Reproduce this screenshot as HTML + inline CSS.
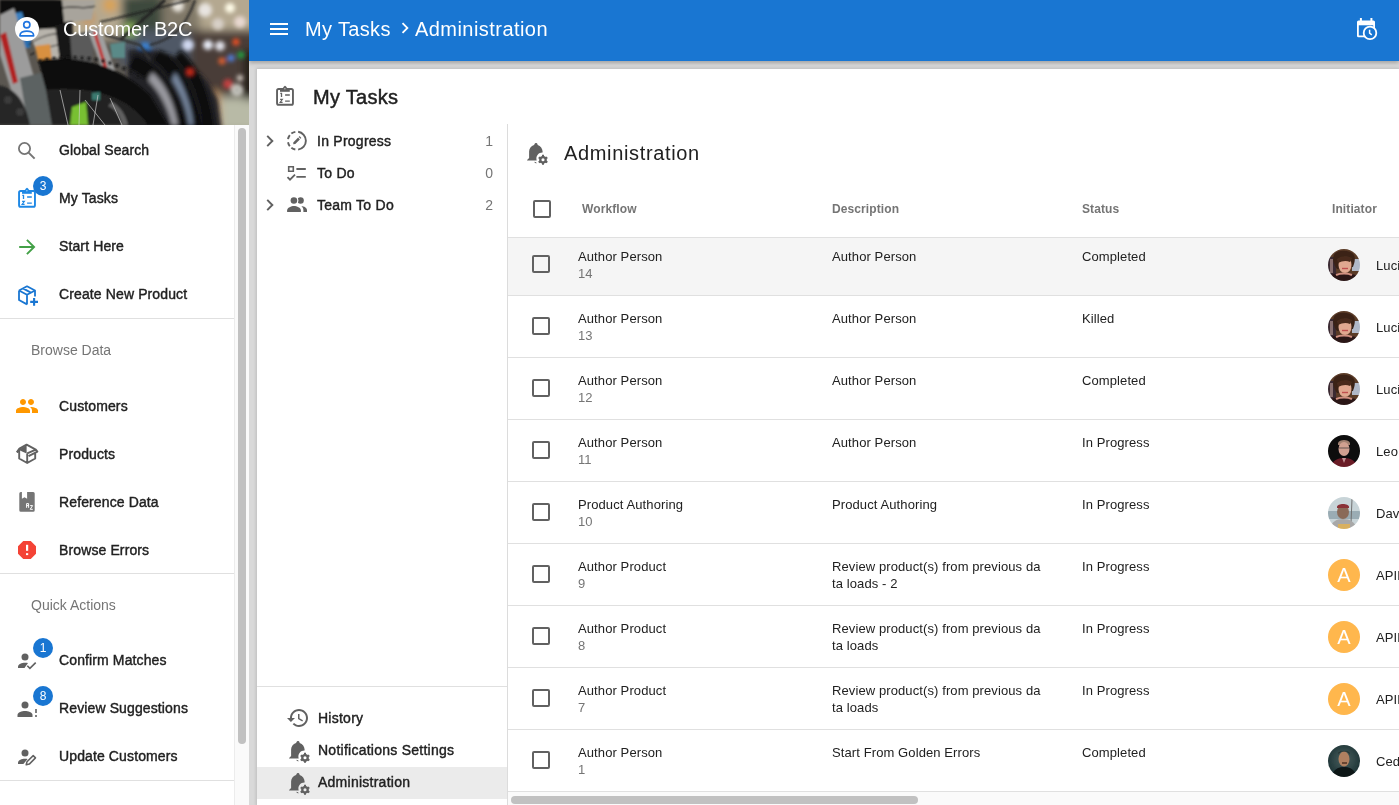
<!DOCTYPE html>
<html><head><meta charset="utf-8">
<style>
*{box-sizing:border-box;margin:0;padding:0}
html,body{width:1399px;height:805px;overflow:hidden;background:#fff;-webkit-font-smoothing:antialiased;font-family:"Liberation Sans",sans-serif;color:#212121}
.a{position:absolute;white-space:nowrap}
svg{display:block}
.mi{position:absolute;left:59px;font-size:14px;line-height:20px;color:#212121;-webkit-text-stroke:0.4px #212121;white-space:nowrap;letter-spacing:0.12px}
.lab{position:absolute;left:31px;font-size:14px;line-height:20px;color:#757575;white-space:nowrap}
.ic{position:absolute}
.badge{position:absolute;width:20px;height:20px;border-radius:50%;background:#1976d2;color:#fff;font-size:12px;line-height:20px;text-align:center}
.div{position:absolute;left:0;width:234px;height:1px;background:#e0e0e0}
.tr{position:absolute;left:317px;font-size:14px;line-height:20px;color:#212121;-webkit-text-stroke:0.4px #212121;white-space:nowrap;letter-spacing:0.25px}
.cnt{position:absolute;right:906px;font-size:14px;line-height:20px;color:#757575;white-space:nowrap}
.hd{position:absolute;font-size:12px;line-height:16px;font-weight:700;color:#757575;white-space:nowrap;letter-spacing:0.1px}
.row{position:absolute;left:508px;width:891px;height:62px;border-bottom:1px solid #e0e0e0}
.cb{position:absolute;width:18px;height:18px;border:2px solid #616161;border-radius:2px}
.t1{position:absolute;font-size:13px;line-height:16px;color:#212121;white-space:nowrap;letter-spacing:0.1px}
.t2{position:absolute;font-size:13px;line-height:16px;color:#757575;white-space:nowrap}
.av{position:absolute;left:1328px;width:32px;height:32px;border-radius:50%;overflow:hidden}
.avA{background:#ffb74d;color:#fff;font-size:20px;line-height:32px;text-align:center}
</style></head>
<body><div style="position:absolute;left:0;top:0;width:1399px;height:805px;will-change:transform">
<!-- grey background -->
<div class="a" style="left:249px;top:61px;width:1150px;height:744px;background:#d9d9d9"></div>


<!-- top blue bar -->
<div class="a" style="left:249px;top:0;width:1150px;height:61px;background:#1976d2;box-shadow:0 2px 4px rgba(0,0,0,.25)"></div>
<svg class="ic" style="left:267px;top:17px" width="24" height="24" viewBox="0 0 24 24"><path fill="#fff" d="M3 18h18v-2H3v2zm0-5h18v-2H3v2zm0-7v2h18V6H3z"/></svg>
<div class="a" style="left:305px;top:17px;font-size:20px;line-height:24px;color:#fff;letter-spacing:0.35px">My Tasks</div>
<svg class="ic" style="left:394px;top:17px" width="22" height="22" viewBox="0 0 24 24"><path fill="#fff" d="M10 6L8.59 7.41 13.17 12l-4.58 4.59L10 18l6-6z"/></svg>
<div class="a" style="left:415px;top:17px;font-size:20px;line-height:24px;color:#fff;letter-spacing:0.45px">Administration</div>
<svg class="ic" style="left:1354px;top:16px" width="25" height="25" viewBox="0 0 25 25"><rect x="3" y="4.5" width="18" height="16.8" rx="1.6" fill="#fff"/><path d="M6.9 2v3.5M17.4 2v3.5" stroke="#fff" stroke-width="2"/><rect x="4.8" y="9.3" width="14.4" height="10.2" fill="#1976d2"/><circle cx="16" cy="16.9" r="6.3" fill="#1976d2" stroke="#fff" stroke-width="1.8"/><path d="M15.6 13.8v3.4l2.2 1.6" fill="none" stroke="#fff" stroke-width="1.5"/></svg>

<!-- white card -->
<div class="a" style="left:257px;top:69px;width:1142px;height:736px;background:#fff;box-shadow:0 0 3px 1px rgba(0,0,0,.13)"></div>

<!-- sidebar -->
<div class="a" style="left:0;top:0;width:249px;height:805px;background:#fff;overflow:hidden">
  <svg class="a" style="left:0;top:0" width="249" height="125" viewBox="0 0 249 125">
    <defs>
      <filter id="b1" x="-30%" y="-30%" width="160%" height="160%"><feGaussianBlur stdDeviation="4"/></filter>
      <filter id="b2" x="-30%" y="-30%" width="160%" height="160%"><feGaussianBlur stdDeviation="2"/></filter>
      <filter id="b3" x="-10%" y="-10%" width="120%" height="120%"><feGaussianBlur stdDeviation="1.1"/></filter>
    </defs>
    <rect width="249" height="125" fill="#5a5650"/>
    <g filter="url(#b1)">
      <rect x="60" y="-10" width="200" height="50" fill="#b4a890"/><rect x="140" y="-10" width="60" height="50" fill="#807868"/>
      <rect x="190" y="30" width="70" height="65" fill="#4a3e38"/>
      <rect x="120" y="30" width="70" height="35" fill="#505866"/>
      <rect x="122" y="-5" width="40" height="35" fill="#3e4a3c"/>
      <circle cx="110" cy="5" r="7" fill="#e0a040"/>
      <circle cx="88" cy="18" r="6" fill="#d09040"/>
      <circle cx="130" cy="30" r="6" fill="#a0d060"/>
      <rect x="220" y="97" width="40" height="35" fill="#b8baa6"/>
      <rect x="207" y="92" width="13" height="40" fill="#c89a68"/>
      <rect x="244" y="50" width="10" height="50" fill="#181410"/>
    </g>
    <g filter="url(#b2)">
      <circle cx="230" cy="8" r="5" fill="#fffce8"/>
      <circle cx="205" cy="10" r="7" fill="#e8e4e0"/>
      <circle cx="178" cy="6" r="6" fill="#e8e4dc"/>
      <circle cx="240" cy="22" r="6" fill="#e8d8d0"/>
      <circle cx="218" cy="24" r="6" fill="#d8d0c8"/>
      <circle cx="208" cy="45" r="5" fill="#e8ecf8"/>
      <circle cx="220" cy="46" r="5" fill="#e0e0e8"/>
      <circle cx="188" cy="45" r="6" fill="#d0d8f0"/>
      <circle cx="236" cy="42" r="3.5" fill="#f05020"/>
      <circle cx="241" cy="55" r="3.5" fill="#20a040"/>
      <circle cx="231" cy="58" r="3.5" fill="#5080e0"/>
      <circle cx="222" cy="61" r="3.5" fill="#e06030"/>
      <circle cx="228" cy="84" r="5" fill="#c04040"/>
      <circle cx="237" cy="90" r="6" fill="#d8d8d0"/>
      <circle cx="237" cy="90" r="1.8" fill="#202020"/>
      <circle cx="240" cy="78" r="3" fill="#e0d8d0"/>
    </g>
    <g filter="url(#b2)">
      <circle cx="145" cy="48" r="6" fill="#3a80d0"/>
      <circle cx="168" cy="62" r="5" fill="#4a88d0"/>
      <path d="M128 50 C160 45 200 60 218 100 L222 130 L128 130z" fill="#222226"/>
      <path d="M180 50 C200 65 212 100 215 130 L204 130 C200 102 192 78 175 58z" fill="#0a0a0a"/>
      <path d="M160 50 C185 62 198 100 203 130 L190 130 C186 102 174 76 152 60z" fill="#0a0a0a"/>
      <path d="M135 55 C165 65 182 100 188 130 L174 130 C168 104 156 82 128 68z" fill="#0a0a0a"/>
      <path d="M152 72 C168 86 175 108 178 125 L172 125 C168 108 160 92 148 80z" fill="#9a9aa0"/>
      <path d="M175 72 C186 90 192 110 193 125 L189 125 C187 110 182 96 172 80z" fill="#7888a0"/>
      <circle cx="190" cy="72" r="3" fill="#e03020"/>
    </g>
    <g filter="url(#b3)">
      <path d="M0 0 H75 L72 30 L58 42 L35 28 L12 20 L0 14z" fill="#0c0c0c"/><path d="M8 14 L22 12 L24 20 L12 22z" fill="#3a80c0"/><path d="M20 35 L32 30 L30 48 L22 48z" fill="#2a70b0"/>
      <path d="M28 30 L60 28 L66 58 L40 60z" fill="#b8b4ac"/><path d="M28 45 C40 36 55 32 66 34M30 55 C45 48 55 44 70 44" stroke="#111" stroke-width="1" fill="none"/>
      <path d="M35 46 L50 44 L52 60 L38 60z" fill="#d89040"/>
      <path d="M62 0 H95 L92 20 L64 22z" fill="#a8a49c"/><path d="M62 8 C75 5 85 10 95 6" stroke="#111" stroke-width="1.2" fill="none"/>
      <path d="M55 25 L72 22 L75 62 L60 62z" fill="#151515"/>
      <path d="M70 35 L95 30 L92 62 L72 62z" fill="#5a5a5a"/>
      <path d="M88 30 L100 28 L115 70 L103 72z" fill="#a0a0a0"/><path d="M100 22 C120 18 150 10 190 0" stroke="#1a1a1a" stroke-width="1.5" fill="none"/><path d="M120 40 L165 0" stroke="#222" stroke-width="3" fill="none"/><path d="M150 45 C170 40 185 30 195 0" stroke="#2a2a2a" stroke-width="2" fill="none"/><path d="M105 35 L140 45 L150 60" stroke="#333" stroke-width="2.5" fill="none"/>
      <path d="M93 32 L96 31 L108 70 L105 71z" fill="#c03030"/>
      <path d="M110 44 L125 42 L125 58 L112 58z" fill="#5a8a88"/>
      <path d="M0 15 L14 8 L45 115 L52 125 L22 125 L0 55z" fill="#9c9c9c"/>
      <path d="M0 35 L6 32 L18 82 L13 84z" fill="#b02424"/>
      <path d="M20 78 L44 72 L56 125 L28 125z" fill="#5c6262"/>
      <path d="M-2 85 C15 88 25 100 30 125 L-2 125z" fill="#262626"/>
      <circle cx="8" cy="100" r="4" fill="#3a3a3a"/><circle cx="20" cy="112" r="4" fill="#3a3a3a"/>
      <path d="M38 60 C75 55 115 62 150 95 L168 125 L148 125 C130 98 95 86 46 90z" fill="#0e0e0e"/>
      <path d="M46 90 C95 86 130 98 148 125 L52 125z" fill="#222"/>
      <path d="M72 107 L86 102 L88 125 L70 125z" fill="#78c030"/>
      <path d="M92 93 L100 92 L100 100 L92 100z" fill="#3a7a70"/>
      <path d="M112 102 C120 106 126 115 128 125 L122 125 C120 115 114 108 108 106z" fill="#606060"/>
    </g>
    <g stroke="#d0d0d0" stroke-width="0.8" opacity="0.85" fill="none">
      <path d="M60 90 L68 125M80 90 L79 125M85 100 L105 125M98 95 L93 125M110 98 L122 125"/>
    </g>
    <g fill="#1a1a1a" filter="url(#b3)"><circle cx="40" cy="61" r="1.8"/><circle cx="47" cy="59.5" r="1.8"/><circle cx="54" cy="58.5" r="1.8"/><circle cx="61" cy="58" r="1.8"/><circle cx="68" cy="57.5" r="1.8"/><circle cx="75" cy="57.5" r="1.8"/><circle cx="82" cy="58" r="1.8"/><circle cx="89" cy="58.5" r="1.8"/><circle cx="96" cy="59.5" r="1.8"/><circle cx="103" cy="61" r="1.8"/><circle cx="110" cy="63" r="1.8"/><circle cx="117" cy="65.5" r="1.8"/><circle cx="124" cy="68.5" r="1.8"/><circle cx="131" cy="72" r="1.8"/><circle cx="138" cy="76" r="1.8"/></g>
  </svg>
  <!-- avatar -->
  <div class="a" style="left:15px;top:17px;width:24px;height:24px;border-radius:50%;background:#fff"></div>
  <svg class="ic" style="left:15px;top:17px" width="24" height="24" viewBox="0 0 24 24"><circle cx="11.8" cy="7.7" r="3.1" fill="none" stroke="#2176e0" stroke-width="1.7"/><path d="M5 18.8v-.6c0-2.8 3.5-4.1 6.8-4.1s6.8 1.3 6.8 4.1v.6z" fill="none" stroke="#2176e0" stroke-width="1.7" stroke-linejoin="round"/></svg>
  <div class="a" style="left:63px;top:17px;font-size:20px;line-height:24px;color:#fff;letter-spacing:-0.15px">Customer B2C</div>

  <!-- scrollbar -->
  <div class="a" style="left:234px;top:125px;width:15px;height:680px;background:#fafafa;border-left:1px solid #ececec"></div>
  <div class="a" style="left:238px;top:128px;width:8px;height:616px;border-radius:4px;background:#c1c1c1"></div>

  <div class="div" style="top:318px"></div>
  <div class="div" style="top:573px"></div>
  <div class="div" style="top:780px"></div>

  <div class="mi" style="top:140px">Global Search</div>
  <div class="mi" style="top:188px">My Tasks</div>
  <div class="mi" style="top:236px">Start Here</div>
  <div class="mi" style="top:284px">Create New Product</div>
  <div class="lab" style="top:340px">Browse Data</div>
  <div class="mi" style="top:396px">Customers</div>
  <div class="mi" style="top:444px">Products</div>
  <div class="mi" style="top:492px">Reference Data</div>
  <div class="mi" style="top:540px">Browse Errors</div>
  <div class="lab" style="top:595px">Quick Actions</div>
  <div class="mi" style="top:650px">Confirm Matches</div>
  <div class="mi" style="top:698px">Review Suggestions</div>
  <div class="mi" style="top:746px">Update Customers</div>

  <!-- icons -->
  <svg class="ic" style="left:15px;top:139px" width="24" height="24" viewBox="0 0 24 24"><circle cx="9.5" cy="9.5" r="5.6" fill="none" stroke="#757575" stroke-width="1.8"/><path d="M13.6 13.6l6 6" stroke="#757575" stroke-width="2"/></svg>
  <svg class="ic" style="left:15px;top:186px" width="24" height="24" viewBox="0 0 24 24"><rect x="4.05" y="4.95" width="15.9" height="15.8" rx="1.6" fill="none" stroke="#1e88e5" stroke-width="1.9"/><rect x="7" y="5.6" width="9.8" height="2.2" fill="#1e88e5"/><path d="M9.2 4.8L11 2.4a1.3 1.3 0 0 1 2 0l1.8 2.4z" fill="#1e88e5"/><circle cx="11.9" cy="4.7" r="0.75" fill="#fff" opacity=".6"/><path d="M7.3 9.3h1.2v3.6" fill="none" stroke="#1e88e5" stroke-width="1.3"/><path d="M12.1 11h4.7M12.1 17.1h4.7" stroke="#1e88e5" stroke-width="1.45"/><path d="M7.1 15.4h2.3l-2.3 3h2.5" fill="none" stroke="#1e88e5" stroke-width="1.1"/></svg>
  <div class="badge" style="left:33px;top:176px">3</div>
  <svg class="ic" style="left:15px;top:234px" width="24" height="24" viewBox="0 0 24 24"><path d="M4.2 13h14.6M11.9 5.8l7.2 7.2-7.2 7.2" fill="none" stroke="#43a047" stroke-width="1.9"/></svg>
  <svg class="ic" style="left:15px;top:282px" width="26" height="26" viewBox="0 0 26 26"><path d="M4 8.5l8-4.2 8 4.2v6M4 8.5v9.5l8 4.4M4 8.5l8 4.2v9.7M12 12.7l8-4.2M7.9 6.4l8 4.2" fill="none" stroke="#1976d2" stroke-width="1.8" stroke-linejoin="round"/><path d="M19.1 16.1v7.6M15.2 19.9h7.8" stroke="#1976d2" stroke-width="2.1"/></svg>
  <svg class="ic" style="left:15px;top:394px" width="24" height="24" viewBox="0 0 24 24"><path fill="#ff9800" d="M16 11c1.66 0 2.99-1.34 2.99-3S17.66 5 16 5c-1.66 0-3 1.34-3 3s1.34 3 3 3zm-8 0c1.66 0 2.99-1.34 2.99-3S9.66 5 8 5C6.34 5 5 6.34 5 8s1.34 3 3 3zm0 2c-2.33 0-7 1.17-7 3.5V19h14v-2.5c0-2.33-4.67-3.5-7-3.5zm8 0c-.29 0-.62.02-.97.05 1.16.84 1.97 1.97 1.97 3.45V19h6v-2.5c0-2.33-4.67-3.5-7-3.5z"/></svg>
  <svg class="ic" style="left:15px;top:441px" width="24" height="24" viewBox="0 0 24 24"><path d="M4.2 8.4v9.1L12.2 22l8-4.5v-6.6M12.2 12.6V22M1.8 11.4L4.4 7.6 11.6 3.6 20.8 8.6 22.4 10.6 13.6 15.2M12.2 12.4L20.8 8.6" fill="none" stroke="#616161" stroke-width="1.9" stroke-linejoin="round"/><path d="M4.4 8.2L11.6 4.2V12.4L4.4 9.2z" fill="#616161"/><path d="M2 11.2L4.4 9.8" stroke="#616161" stroke-width="1.6"/></svg>
  <svg class="ic" style="left:15px;top:489px" width="24" height="24" viewBox="0 0 24 24"><path d="M5.8 2.9H6.9V9.8L9.5 8.3 12.1 9.8V2.9H18.2A1.5 1.5 0 0 1 19.7 4.4V21.2A1.5 1.5 0 0 1 18.2 22.7H5.8A1.5 1.5 0 0 1 4.3 21.2V4.4A1.5 1.5 0 0 1 5.8 2.9z" fill="#757575"/><path d="M11.6 18.8V14.6h2v4.2M11.6 16.6h2M15.2 16.6h2.4l-2.4 3.7h2.6" fill="none" stroke="#fff" stroke-width="1"/></svg>
  <svg class="ic" style="left:15px;top:538px" width="24" height="24" viewBox="0 0 24 24"><path fill="#f44336" d="M15.73 3H8.27L3 8.27v7.46L8.27 21h7.46L21 15.73V8.27L15.73 3z"/><rect x="11" y="6.8" width="2.2" height="6" fill="#fff"/><rect x="11" y="15.2" width="2.2" height="1.9" fill="#fff"/></svg>
  <svg class="ic" style="left:15px;top:649px" width="24" height="24" viewBox="0 0 24 24"><circle cx="10" cy="8" r="3.5" fill="#616161"/><path d="M3 19v-1.5c0-2.5 4-3.8 7-3.8 1 0 2 .1 3 .4L9.5 19z" fill="#616161"/><path d="M12.3 16.8l2.6 2.6 5.8-5.8" fill="none" stroke="#616161" stroke-width="1.6"/></svg>
  <div class="badge" style="left:33px;top:638px">1</div>
  <svg class="ic" style="left:15px;top:697px" width="24" height="24" viewBox="0 0 24 24"><circle cx="10" cy="8" r="3.5" fill="#616161"/><path d="M2.5 20v-2c0-2.6 4.5-4 7.5-4s7.5 1.4 7.5 4v2z" fill="#616161"/><path d="M21 12v4M21 18v2" stroke="#616161" stroke-width="1.6"/></svg>
  <div class="badge" style="left:33px;top:686px">8</div>
  <svg class="ic" style="left:15px;top:745px" width="24" height="24" viewBox="0 0 24 24"><circle cx="10" cy="8" r="3.5" fill="#616161"/><path d="M3 19v-1.5c0-2.5 4-3.8 7-3.8 1 0 1.8.1 2.6.3L8.4 19z" fill="#616161"/><path d="M11.2 19.8l.8-3 6.2-6.2 2.3 2.3-6.2 6.2z" fill="none" stroke="#616161" stroke-width="1.5" stroke-linejoin="round"/></svg>
</div>

<!-- card header -->
<div class="a" style="left:313px;top:85px;font-size:20px;line-height:24px;color:#212121;-webkit-text-stroke:0.45px #212121;letter-spacing:0.3px">My Tasks</div>

<svg class="ic" style="left:273px;top:84px" width="24" height="24" viewBox="0 0 24 24"><rect x="4.05" y="4.95" width="15.9" height="15.8" rx="1.6" fill="none" stroke="#616161" stroke-width="1.9"/><rect x="7" y="5.6" width="9.8" height="2.2" fill="#616161"/><path d="M9.2 4.8L11 2.4a1.3 1.3 0 0 1 2 0l1.8 2.4z" fill="#616161"/><circle cx="11.9" cy="4.7" r="0.75" fill="#fff" opacity=".6"/><path d="M7.3 9.3h1.2v3.6" fill="none" stroke="#616161" stroke-width="1.3"/><path d="M12.1 11h4.7M12.1 17.1h4.7" stroke="#616161" stroke-width="1.45"/><path d="M7.1 15.4h2.3l-2.3 3h2.5" fill="none" stroke="#616161" stroke-width="1.1"/></svg>
<!-- tree -->
<svg class="ic" style="left:261px;top:132px" width="18" height="18" viewBox="0 0 24 24"><path d="M8.3 5.2l6.8 6.8-6.8 6.8" fill="none" stroke="#616161" stroke-width="2.6"/></svg>
<svg class="ic" style="left:285px;top:129px" width="24" height="24" viewBox="0 0 24 24"><path d="M13.15 2.79A9.0 9.0 0 0 1 13.15 20.61M10.34 20.56A9.0 9.0 0 0 1 6.36 18.79M4.81 17.24A9.0 9.0 0 0 1 3.04 13.26M3.04 10.14A9.0 9.0 0 0 1 4.81 6.16M6.36 4.61A9.0 9.0 0 0 1 10.34 2.84" fill="none" stroke="#616161" stroke-width="1.9"/><path d="M8.2 15.3l.3-2.1 4.6-4.6 1.8 1.8-4.6 4.6z" fill="#616161"/><path d="M13.7 8l.9-.9 1.8 1.8-.9.9z" fill="#616161"/></svg>
<svg class="ic" style="left:285px;top:161px" width="24" height="24" viewBox="0 0 24 24"><path d="M3.7 5.7h4.6v4.6H3.7z" fill="none" stroke="#616161" stroke-width="1.6"/><path d="M11.4 8h9.4M11.4 15.9h9.4M2.5 16.2l2.5 2.5 5-5" fill="none" stroke="#616161" stroke-width="1.8"/></svg>
<svg class="ic" style="left:261px;top:196px" width="18" height="18" viewBox="0 0 24 24"><path d="M8.3 5.2l6.8 6.8-6.8 6.8" fill="none" stroke="#616161" stroke-width="2.6"/></svg>
<svg class="ic" style="left:285px;top:193px" width="24" height="24" viewBox="0 0 24 24"><circle cx="15.6" cy="7.5" r="3.2" fill="#616161"/><circle cx="8.9" cy="7.5" r="4.5" fill="#fff"/><circle cx="8.9" cy="7.5" r="3.3" fill="#616161"/><path d="M2.1 19v-1.5c0-2.6 4.2-4.4 6.9-4.4s6.9 1.8 6.9 4.4V19z" fill="#616161"/><path d="M16.4 13.1c2.7.4 5.6 1.8 5.6 4.1V19h-3.6v-1.6c0-1.7-.7-3.2-2-4.3z" fill="#616161"/></svg>

<div class="tr" style="top:131px">In Progress</div>
<div class="cnt" style="top:131px">1</div>
<div class="tr" style="top:163px">To Do</div>
<div class="cnt" style="top:163px">0</div>
<div class="tr" style="top:195px">Team To Do</div>
<div class="cnt" style="top:195px">2</div>

<div class="a" style="left:257px;top:686px;width:250px;height:1px;background:#e0e0e0"></div>
<div class="a" style="left:257px;top:767px;width:250px;height:32px;background:#ebebeb"></div>
<svg class="ic" style="left:286px;top:706px" width="24" height="24" viewBox="0 0 24 24"><path fill="#616161" d="M13 3c-4.97 0-9 4.03-9 9H1l3.89 3.89.07.14L9 12H6c0-3.87 3.13-7 7-7s7 3.13 7 7-3.13 7-7 7c-1.93 0-3.68-.79-4.94-2.06l-1.42 1.42C8.27 19.99 10.51 21 13 21c4.97 0 9-4.03 9-9s-4.03-9-9-9zm-1 5v5l4.28 2.54.72-1.21-3.5-2.08V8H12z"/></svg>
<svg class="ic" style="left:287px;top:739px" width="24" height="24" viewBox="0 0 24 24"><path d="M11 1.9c.8 0 1.4.6 1.5 1.3l.2.7c2.9.9 4.8 3.6 4.9 6.7v.9a6 6 0 0 0-5.9 8H2.1v-.5l2-2.1V10.6c0-3.1 2-5.8 4.9-6.7l.5-.7c.1-.7.7-1.3 1.5-1.3z" fill="#616161"/><path d="M9.6 21.3l1.8.6" stroke="#616161" stroke-width="1"/><g transform="translate(18 18.8)"><circle r="2.7" fill="none" stroke="#616161" stroke-width="2.3"/><path d="M0-5v2.4M0 5v-2.4M-4.3-2.5l2 1.2M4.3 2.5l-2-1.2M-4.3 2.5l2-1.2M4.3-2.5l-2 1.2" stroke="#616161" stroke-width="2"/></g></svg>
<svg class="ic" style="left:287px;top:771px" width="24" height="24" viewBox="0 0 24 24"><path d="M11 1.9c.8 0 1.4.6 1.5 1.3l.2.7c2.9.9 4.8 3.6 4.9 6.7v.9a6 6 0 0 0-5.9 8H2.1v-.5l2-2.1V10.6c0-3.1 2-5.8 4.9-6.7l.5-.7c.1-.7.7-1.3 1.5-1.3z" fill="#616161"/><path d="M9.6 21.3l1.8.6" stroke="#616161" stroke-width="1"/><g transform="translate(18 18.8)"><circle r="2.7" fill="none" stroke="#616161" stroke-width="2.3"/><path d="M0-5v2.4M0 5v-2.4M-4.3-2.5l2 1.2M4.3 2.5l-2-1.2M-4.3 2.5l2-1.2M4.3-2.5l-2 1.2" stroke="#616161" stroke-width="2"/></g></svg>
<svg class="ic" style="left:525px;top:141px" width="24" height="24" viewBox="0 0 24 24"><path d="M11 1.9c.8 0 1.4.6 1.5 1.3l.2.7c2.9.9 4.8 3.6 4.9 6.7v.9a6 6 0 0 0-5.9 8H2.1v-.5l2-2.1V10.6c0-3.1 2-5.8 4.9-6.7l.5-.7c.1-.7.7-1.3 1.5-1.3z" fill="#616161"/><path d="M9.6 21.3l1.8.6" stroke="#616161" stroke-width="1"/><g transform="translate(18 18.8)"><circle r="2.7" fill="none" stroke="#616161" stroke-width="2.3"/><path d="M0-5v2.4M0 5v-2.4M-4.3-2.5l2 1.2M4.3 2.5l-2-1.2M-4.3 2.5l2-1.2M4.3-2.5l-2 1.2" stroke="#616161" stroke-width="2"/></g></svg>
<div class="tr" style="left:318px;top:708px">History</div>
<div class="tr" style="left:318px;top:740px">Notifications Settings</div>
<div class="tr" style="left:318px;top:772px">Administration</div>

<!-- vertical divider -->
<div class="a" style="left:507px;top:124px;width:1px;height:681px;background:#dcdcdc"></div>

<!-- Admin header -->
<div class="a" style="left:564px;top:141px;font-size:20px;line-height:24px;color:#212121;letter-spacing:0.65px">Administration</div>

<!-- table header -->
<div class="cb" style="left:533px;top:200px"></div>
<div class="hd" style="left:582px;top:201px">Workflow</div>
<div class="hd" style="left:832px;top:201px">Description</div>
<div class="hd" style="left:1082px;top:201px">Status</div>
<div class="hd" style="left:1332px;top:201px">Initiator</div>
<div class="a" style="left:508px;top:237px;width:891px;height:1px;background:#e0e0e0"></div>
<div class="a" style="left:508px;top:238px;width:891px;height:57px;background:#f5f5f5"></div>
<div class="a" style="left:508px;top:295px;width:891px;height:1px;background:#e0e0e0"></div>
<div class="cb" style="left:532px;top:255px"></div>
<div class="t1" style="left:578px;top:249px">Author Person</div>
<div class="t2" style="left:578px;top:266px">14</div>
<div class="t1" style="left:832px;top:249px">Author Person</div>
<div class="t1" style="left:1082px;top:249px">Completed</div>
<div class="av" style="top:249px"><svg width="32" height="32" viewBox="0 0 32 32"><defs><filter id="fa"><feGaussianBlur stdDeviation="0.7"/></filter></defs><g filter="url(#fa)"><rect width="32" height="32" fill="#5a3a28"/><rect x="0" y="8" width="8" height="18" fill="#3a2a30"/><rect x="2" y="10" width="3" height="14" fill="#8a7070"/><rect x="24" y="10" width="8" height="12" fill="#b0b8c8"/><path d="M6 6C8 1 22 0 26 6c2 4 0 9-1 12L9 20C6 16 4 10 6 6z" fill="#3a2418"/><ellipse cx="17" cy="16" rx="6.5" ry="8" fill="#e0a890"/><path d="M9 10c3-3 10-4 15-1l-2 4c-4-2-8-1-12 1z" fill="#4a2c1c"/><path d="M14 19.5h6" stroke="#c05050" stroke-width="1.4"/><path d="M0 32L2 27c4-3 9-3 14-3 6 0 11 1 14 4v4z" fill="#2a1418"/><path d="M8 26c4-2 12-2 16 0" stroke="#d09080" stroke-width="2" fill="none"/></g></svg></div>
<div class="t1" style="left:1376px;top:258px">Lucia</div>
<div class="a" style="left:508px;top:296px;width:891px;height:61px;background:#fff"></div>
<div class="a" style="left:508px;top:357px;width:891px;height:1px;background:#e0e0e0"></div>
<div class="cb" style="left:532px;top:317px"></div>
<div class="t1" style="left:578px;top:311px">Author Person</div>
<div class="t2" style="left:578px;top:328px">13</div>
<div class="t1" style="left:832px;top:311px">Author Person</div>
<div class="t1" style="left:1082px;top:311px">Killed</div>
<div class="av" style="top:311px"><svg width="32" height="32" viewBox="0 0 32 32"><defs><filter id="fa"><feGaussianBlur stdDeviation="0.7"/></filter></defs><g filter="url(#fa)"><rect width="32" height="32" fill="#5a3a28"/><rect x="0" y="8" width="8" height="18" fill="#3a2a30"/><rect x="2" y="10" width="3" height="14" fill="#8a7070"/><rect x="24" y="10" width="8" height="12" fill="#b0b8c8"/><path d="M6 6C8 1 22 0 26 6c2 4 0 9-1 12L9 20C6 16 4 10 6 6z" fill="#3a2418"/><ellipse cx="17" cy="16" rx="6.5" ry="8" fill="#e0a890"/><path d="M9 10c3-3 10-4 15-1l-2 4c-4-2-8-1-12 1z" fill="#4a2c1c"/><path d="M14 19.5h6" stroke="#c05050" stroke-width="1.4"/><path d="M0 32L2 27c4-3 9-3 14-3 6 0 11 1 14 4v4z" fill="#2a1418"/><path d="M8 26c4-2 12-2 16 0" stroke="#d09080" stroke-width="2" fill="none"/></g></svg></div>
<div class="t1" style="left:1376px;top:320px">Lucia</div>
<div class="a" style="left:508px;top:358px;width:891px;height:61px;background:#fff"></div>
<div class="a" style="left:508px;top:419px;width:891px;height:1px;background:#e0e0e0"></div>
<div class="cb" style="left:532px;top:379px"></div>
<div class="t1" style="left:578px;top:373px">Author Person</div>
<div class="t2" style="left:578px;top:390px">12</div>
<div class="t1" style="left:832px;top:373px">Author Person</div>
<div class="t1" style="left:1082px;top:373px">Completed</div>
<div class="av" style="top:373px"><svg width="32" height="32" viewBox="0 0 32 32"><defs><filter id="fa"><feGaussianBlur stdDeviation="0.7"/></filter></defs><g filter="url(#fa)"><rect width="32" height="32" fill="#5a3a28"/><rect x="0" y="8" width="8" height="18" fill="#3a2a30"/><rect x="2" y="10" width="3" height="14" fill="#8a7070"/><rect x="24" y="10" width="8" height="12" fill="#b0b8c8"/><path d="M6 6C8 1 22 0 26 6c2 4 0 9-1 12L9 20C6 16 4 10 6 6z" fill="#3a2418"/><ellipse cx="17" cy="16" rx="6.5" ry="8" fill="#e0a890"/><path d="M9 10c3-3 10-4 15-1l-2 4c-4-2-8-1-12 1z" fill="#4a2c1c"/><path d="M14 19.5h6" stroke="#c05050" stroke-width="1.4"/><path d="M0 32L2 27c4-3 9-3 14-3 6 0 11 1 14 4v4z" fill="#2a1418"/><path d="M8 26c4-2 12-2 16 0" stroke="#d09080" stroke-width="2" fill="none"/></g></svg></div>
<div class="t1" style="left:1376px;top:382px">Lucia</div>
<div class="a" style="left:508px;top:420px;width:891px;height:61px;background:#fff"></div>
<div class="a" style="left:508px;top:481px;width:891px;height:1px;background:#e0e0e0"></div>
<div class="cb" style="left:532px;top:441px"></div>
<div class="t1" style="left:578px;top:435px">Author Person</div>
<div class="t2" style="left:578px;top:452px">11</div>
<div class="t1" style="left:832px;top:435px">Author Person</div>
<div class="t1" style="left:1082px;top:435px">In Progress</div>
<div class="av" style="top:435px"><svg width="32" height="32" viewBox="0 0 32 32"><defs><filter id="fb"><feGaussianBlur stdDeviation="0.7"/></filter></defs><g filter="url(#fb)"><rect width="32" height="32" fill="#0c0c10"/><path d="M10 8c1-4 11-4 12 0v2H10z" fill="#a08070"/><ellipse cx="16" cy="14" rx="5.5" ry="7" fill="#d0a090"/><rect x="11" y="12" width="10" height="2" fill="#9a7a70"/><path d="M3 32c1-6 6-9 13-9s12 3 13 9z" fill="#6a1a28"/><path d="M14 23l2 5 2-5" fill="#c09090"/></g></svg></div>
<div class="t1" style="left:1376px;top:444px">Leo</div>
<div class="a" style="left:508px;top:482px;width:891px;height:61px;background:#fff"></div>
<div class="a" style="left:508px;top:543px;width:891px;height:1px;background:#e0e0e0"></div>
<div class="cb" style="left:532px;top:503px"></div>
<div class="t1" style="left:578px;top:497px">Product Authoring</div>
<div class="t2" style="left:578px;top:514px">10</div>
<div class="t1" style="left:832px;top:497px">Product Authoring</div>
<div class="t1" style="left:1082px;top:497px">In Progress</div>
<div class="av" style="top:497px"><svg width="32" height="32" viewBox="0 0 32 32"><defs><filter id="fc"><feGaussianBlur stdDeviation="0.6"/></filter></defs><g filter="url(#fc)"><rect width="32" height="32" fill="#c8d4d8"/><rect y="14" width="32" height="8" fill="#9aacb4"/><path d="M24 2L23 26" stroke="#707070" stroke-width="1"/><ellipse cx="15" cy="15" rx="6" ry="7" fill="#8a6a58"/><path d="M9 10c0-4 12-4 12 0v1H9z" fill="#8a3038"/><path d="M2 32c1-7 6-10 13-10s12 3 14 10z" fill="#a8a8a8"/><rect x="10" y="27" width="12" height="5" fill="#d8b060"/></g></svg></div>
<div class="t1" style="left:1376px;top:506px">David</div>
<div class="a" style="left:508px;top:544px;width:891px;height:61px;background:#fff"></div>
<div class="a" style="left:508px;top:605px;width:891px;height:1px;background:#e0e0e0"></div>
<div class="cb" style="left:532px;top:565px"></div>
<div class="t1" style="left:578px;top:559px">Author Product</div>
<div class="t2" style="left:578px;top:576px">9</div>
<div class="t1" style="left:832px;top:559px">Review product(s) from previous da</div>
<div class="t1" style="left:832px;top:576px">ta loads - 2</div>
<div class="t1" style="left:1082px;top:559px">In Progress</div>
<div class="av avA" style="top:559px">A</div>
<div class="t1" style="left:1376px;top:568px">APIKEY</div>
<div class="a" style="left:508px;top:606px;width:891px;height:61px;background:#fff"></div>
<div class="a" style="left:508px;top:667px;width:891px;height:1px;background:#e0e0e0"></div>
<div class="cb" style="left:532px;top:627px"></div>
<div class="t1" style="left:578px;top:621px">Author Product</div>
<div class="t2" style="left:578px;top:638px">8</div>
<div class="t1" style="left:832px;top:621px">Review product(s) from previous da</div>
<div class="t1" style="left:832px;top:638px">ta loads</div>
<div class="t1" style="left:1082px;top:621px">In Progress</div>
<div class="av avA" style="top:621px">A</div>
<div class="t1" style="left:1376px;top:630px">APIKEY</div>
<div class="a" style="left:508px;top:668px;width:891px;height:61px;background:#fff"></div>
<div class="a" style="left:508px;top:729px;width:891px;height:1px;background:#e0e0e0"></div>
<div class="cb" style="left:532px;top:689px"></div>
<div class="t1" style="left:578px;top:683px">Author Product</div>
<div class="t2" style="left:578px;top:700px">7</div>
<div class="t1" style="left:832px;top:683px">Review product(s) from previous da</div>
<div class="t1" style="left:832px;top:700px">ta loads</div>
<div class="t1" style="left:1082px;top:683px">In Progress</div>
<div class="av avA" style="top:683px">A</div>
<div class="t1" style="left:1376px;top:692px">APIKEY</div>
<div class="a" style="left:508px;top:730px;width:891px;height:61px;background:#fff"></div>
<div class="a" style="left:508px;top:791px;width:891px;height:1px;background:#e0e0e0"></div>
<div class="cb" style="left:532px;top:751px"></div>
<div class="t1" style="left:578px;top:745px">Author Person</div>
<div class="t2" style="left:578px;top:762px">1</div>
<div class="t1" style="left:832px;top:745px">Start From Golden Errors</div>
<div class="t1" style="left:1082px;top:745px">Completed</div>
<div class="av" style="top:745px"><svg width="32" height="32" viewBox="0 0 32 32"><defs><radialGradient id="gc" cx="0.5" cy="0.45" r="0.6"><stop offset="0" stop-color="#4a6060"/><stop offset="1" stop-color="#1a3032"/></radialGradient><filter id="fd"><feGaussianBlur stdDeviation="0.6"/></filter></defs><g filter="url(#fd)"><rect width="32" height="32" fill="url(#gc)"/><ellipse cx="16" cy="14" rx="5.5" ry="7.5" fill="#b08060"/><path d="M10 10c0-5 12-5 12 0v-1C22 5 10 5 10 9z" fill="#201810"/><path d="M14 18h5" stroke="#503020" stroke-width="1.5"/><path d="M4 32c1-7 5-10 12-10s11 3 12 10z" fill="#0a1418"/></g></svg></div>
<div class="t1" style="left:1376px;top:754px">Cedric</div>
<!-- h scrollbar -->
<div class="a" style="left:508px;top:792px;width:891px;height:13px;background:#fafafa"></div>
<div class="a" style="left:511px;top:796px;width:407px;height:8px;border-radius:4px;background:#c1c1c1"></div>

</div></body></html>
